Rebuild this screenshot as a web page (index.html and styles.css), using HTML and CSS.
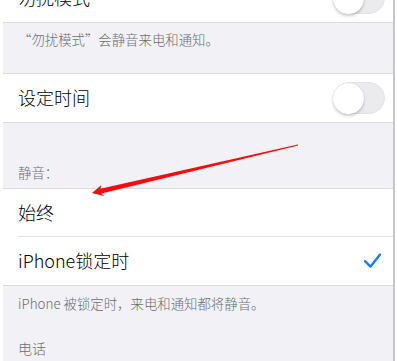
FILE: index.html
```html
<!DOCTYPE html>
<html lang="zh-CN">
<head>
<meta charset="utf-8">
<link rel="stylesheet" href="styles.css">
</head>
<body>
<div class="page">
  <div class="group first">
    <div class="row">
      <span class="label">勿扰模式</span>
      <span class="toggle"><span class="knob"></span></span>
    </div>
  </div>
  <div class="footer f1">“勿扰模式”会静音来电和通知。</div>
  <div class="group">
    <div class="row">
      <span class="label">设定时间</span>
      <span class="toggle"><span class="knob"></span></span>
    </div>
  </div>
  <div class="header h1">静音：</div>
  <div class="group">
    <div class="row sep">
      <span class="label">始终</span>
    </div>
    <div class="row">
      <span class="label">iPhone锁定时</span>
      <svg class="check" width="20" height="18" viewBox="0 0 20 18"><path d="M3 9.2 L8.6 14.6 L18 2.6" fill="none" stroke="#157efb" stroke-width="2.4" stroke-linecap="round" stroke-linejoin="round"/></svg>
    </div>
  </div>
  <div class="footer f2">iPhone 被锁定时，来电和通知都将静音。</div>
  <div class="header h2">电话</div>
</div>
<svg class="arrow" width="397" height="361" viewBox="0 0 397 361"><polygon points="298.1,145.6 101.4,193.4 104,196 92,193 101.4,185 100.3,188.8 297.9,144.4" fill="#fa0a0a"/></svg>
</body>
</html>
```
FILE: styles.css
```css
html, body {
  margin: 0;
  padding: 0;
  background: #ffffff;
  overflow: hidden;
}
body {
  width: 397px;
  height: 361px;
  position: relative;
  font-family: "Noto Sans CJK SC", "Noto Sans", sans-serif;
}
.page {
  margin-left: 3px;
  margin-top: -26px;
  width: 390px;
  height: 400px;
  background: #f1f1f6;
  border-right: 2px solid #c6c6c8;
}
.group {
  background: #ffffff;
  border-top: 1px solid #dcdce0;
  border-bottom: 1px solid #dcdce0;
}
.group.first {
  border-top: none;
}
.row {
  height: 48px;
  display: flex;
  align-items: center;
  justify-content: space-between;
  padding: 0 8px 0 15px;
  position: relative;
}
.row.sep::after {
  content: "";
  position: absolute;
  left: 15px;
  right: 0;
  bottom: 0;
  height: 1px;
  background: #e2e2e6;
}
.label {
  font-size: 18px;
  font-weight: 300;
  color: #000;
  line-height: 24px;
  margin-top: -2px;
}
.toggle {
  width: 52px;
  height: 32px;
  border-radius: 17px;
  background: #ebebee;
  box-sizing: border-box;
  border: 1px solid #e3e3e6;
  display: flex;
  align-items: center;
}
.knob {
  width: 31px;
  height: 31px;
  border-radius: 50%;
  background: #ffffff;
  box-shadow: 0 2px 3px rgba(0,0,0,0.2), 0 0 1px rgba(0,0,0,0.15);
  margin-left: -1px;
}
.check {
  margin-right: 3px;
}
.footer, .header {
  font-size: 13.4px;
  font-weight: 300;
  color: #6d6d72;
  line-height: 18px;
  padding-left: 15px;
}
.footer.f1 {
  padding-top: 7px;
  box-sizing: border-box;
  height: 50px;
}
.header.h1 {
  height: 65px;
  box-sizing: border-box;
  padding-top: 40px;
}
.footer.f2 {
  padding-top: 8px;
  height: 40px;
  box-sizing: border-box;
}
.header.h2 {
  padding-top: 13px;
  font-size: 14px;
}
.arrow {
  position: absolute;
  left: 0;
  top: 0;
  pointer-events: none;
}
```
